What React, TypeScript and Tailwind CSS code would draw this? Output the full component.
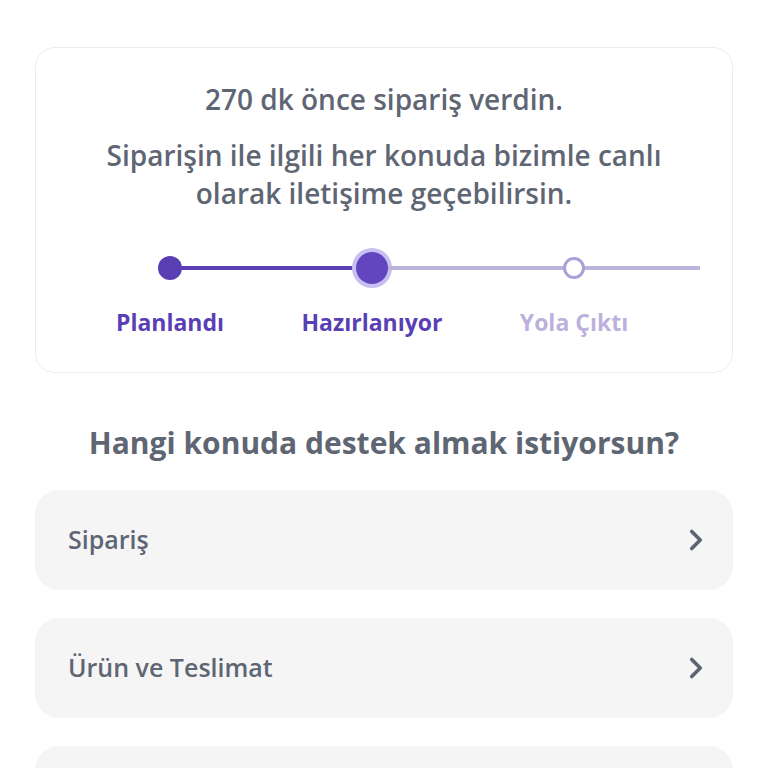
import { ChevronRight } from 'lucide-react';

const topics = ['Sipariş', 'Ürün ve Teslimat', 'Diğer'];

const steps = [
  { label: 'Planlandı', color: 'text-[#5a3fb4]' },
  { label: 'Hazırlanıyor', color: 'text-[#5a3fb4]' },
  { label: 'Yola Çıktı', color: 'text-[#bcb1dc]' },
];

function Stepper() {
  return (
    <div className="mt-[36px]">
      {/* Track */}
      <div className="flex h-10 items-center pl-[122px]">
        <div className="h-6 w-6 shrink-0 rounded-full bg-[#5a3fb4]" />
        <div className="h-1 w-[174px] shrink-0 bg-[#5a3fb4]" />
        <div className="flex h-10 w-10 shrink-0 -mx-1 items-center justify-center rounded-full bg-[#c9bff0]">
          <div className="h-8 w-8 rounded-full bg-[#6246c0]" />
        </div>
        <div className="h-1 w-[175px] shrink-0 bg-[#bdb4dc]" />
        <div className="h-[22px] w-[22px] shrink-0 rounded-full border-[3px] border-[#ab9ed9] bg-white" />
        <div className="h-1 w-[115px] shrink-0 bg-[#bdb4dc]" />
      </div>

      {/* Labels */}
      <div className="mt-[19px] flex pl-[33px]">
        {steps.map((s) => (
          <div key={s.label} className={`w-[202px] text-center text-[23px] font-bold leading-[30px] ${s.color}`}>
            {s.label}
          </div>
        ))}
      </div>
    </div>
  );
}

export default function App() {
  return (
    <div className="min-h-screen bg-white pb-10 pt-[47px] text-[#5f6673] [font-family:'Open_Sans',sans-serif]">
      {/* Order status card */}
      <div className="mx-[35px] rounded-[20px] border-[1.5px] border-[#ececee] pb-[35px] pt-[32px]">
        <p className="text-center text-[28px] font-semibold leading-[38px]">270 dk önce sipariş verdin.</p>
        <p className="mx-auto mt-[18px] max-w-[570px] text-center text-[28px] font-semibold leading-[38px]">
          Siparişin ile ilgili her konuda bizimle canlı olarak iletişime geçebilirsin.
        </p>
        <Stepper />
      </div>

      <h2 className="mt-[52px] text-center text-[30px] font-bold leading-9">Hangi konuda destek almak istiyorsun?</h2>

      <div className="mx-[35px] mt-[29px] flex flex-col gap-[28px]">
        {topics.map((t) => (
          <button
            key={t}
            className="flex h-[100px] items-center justify-between rounded-[24px] bg-[#f5f5f6] pl-[33px] pr-[20px] text-left"
          >
            <span className="text-[25px] font-semibold">{t}</span>
            <ChevronRight size={34} strokeWidth={2.6} className="text-[#5f6673]" />
          </button>
        ))}
      </div>
    </div>
  );
}
